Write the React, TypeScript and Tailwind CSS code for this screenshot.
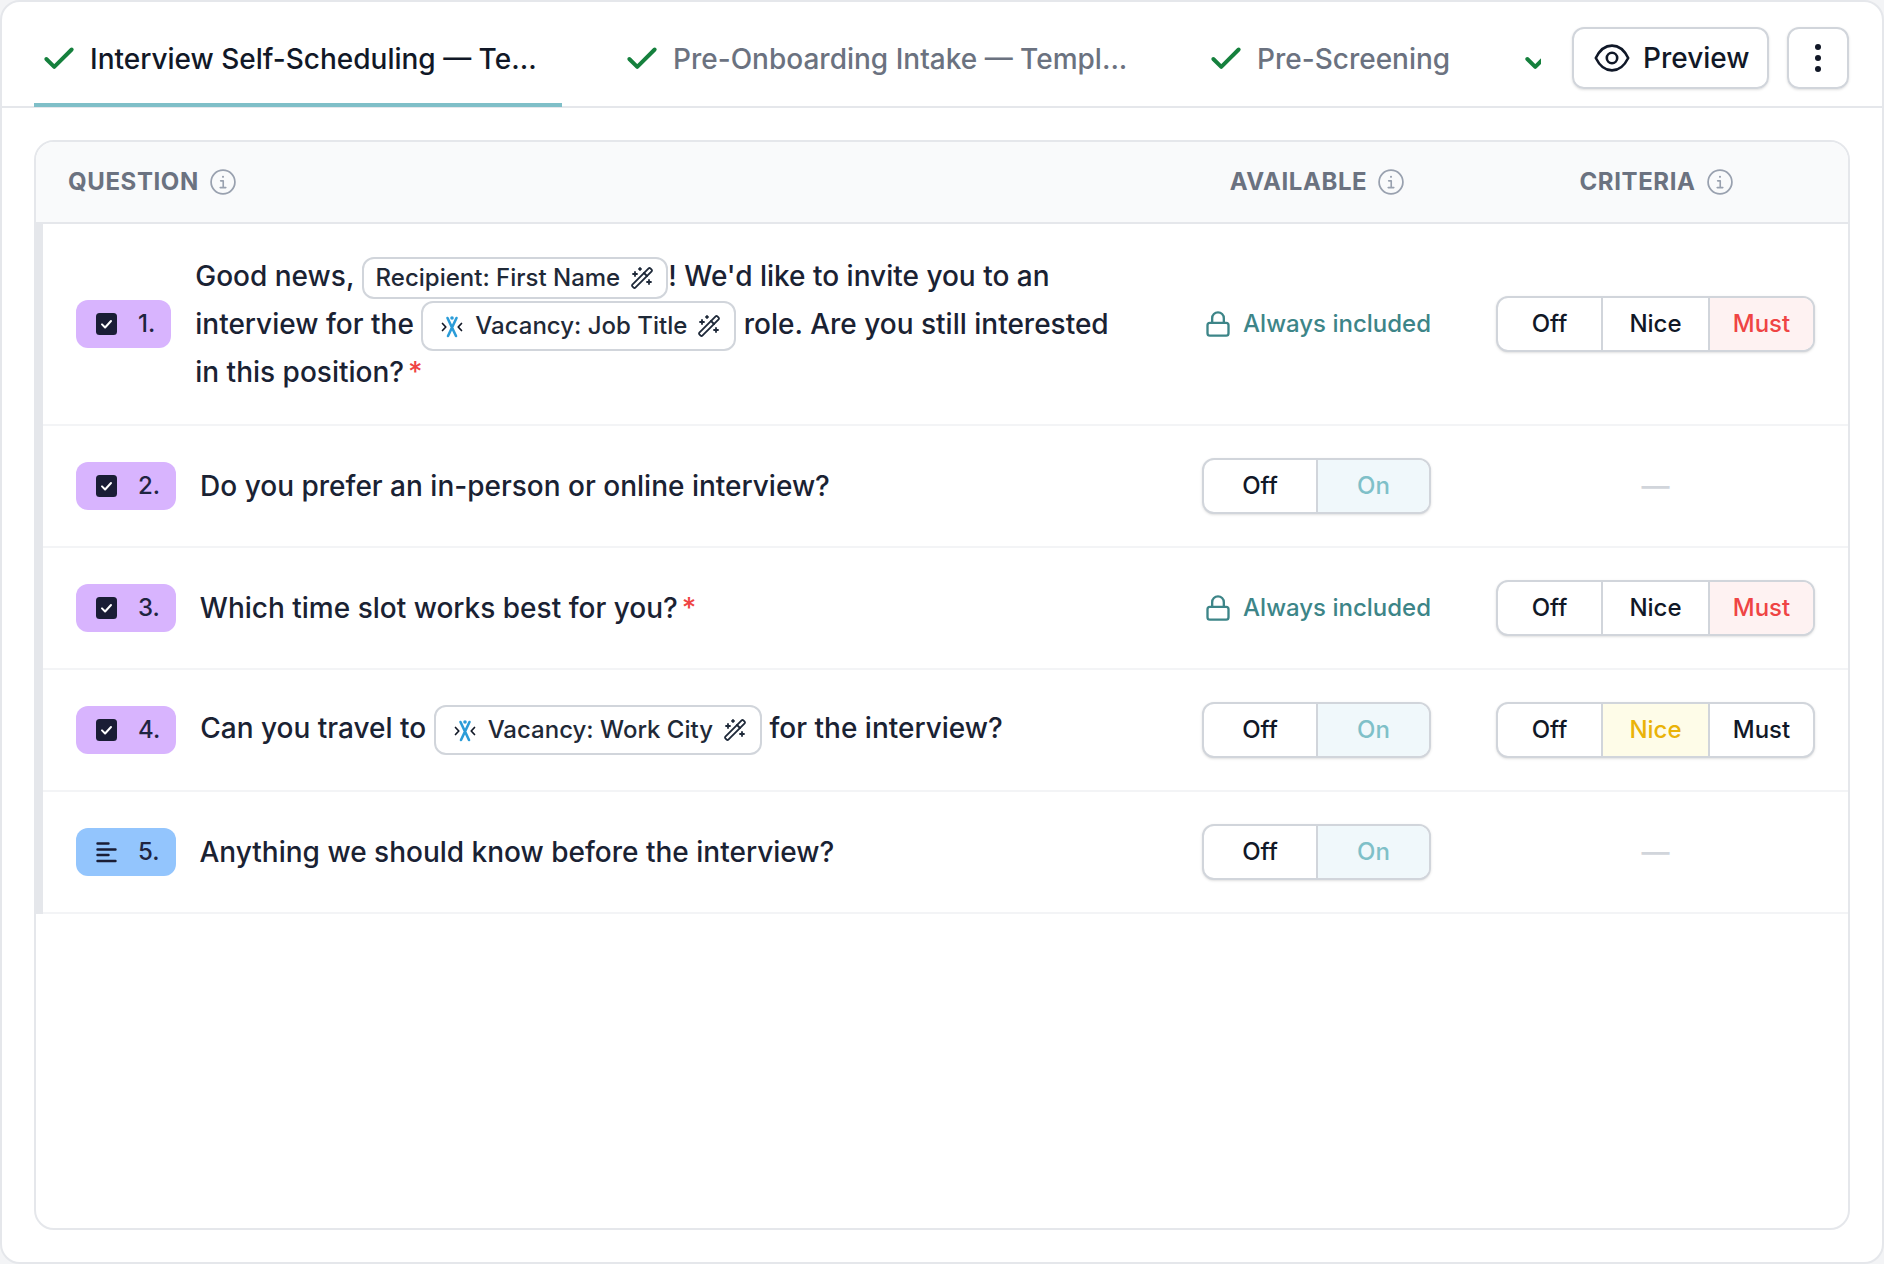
import { Check, Lock, WandSparkles } from "lucide-react";
import type { ReactNode } from "react";

function InfoIcon() {
  return (
    <svg viewBox="0 0 24 24" className="w-7 h-7 shrink-0 text-gray-400" fill="none" stroke="currentColor" strokeWidth="1.5" strokeLinecap="round" strokeLinejoin="round">
      <circle cx="12" cy="12" r="10.2" />
      <path d="M10 11h2.2v5.6M9.6 16.8h4.8" strokeWidth="1.4" />
      <circle cx="12" cy="7.6" r="0.9" fill="currentColor" stroke="none" />
    </svg>
  );
}

function EyeIcon() {
  return (
    <svg viewBox="0 0 36 28" className="w-9 h-7 text-gray-900" fill="none" stroke="currentColor" strokeWidth="2.6" strokeLinejoin="round">
      <path d="M1.8 14C5.6 6.2 11.2 1.6 18 1.6S30.4 6.2 34.2 14C30.4 21.8 24.8 26.4 18 26.4S5.6 21.8 1.8 14Z" />
      <circle cx="18" cy="14" r="5.2" />
    </svg>
  );
}

function VacancyLogo() {
  return (
    <svg viewBox="0 0 24 24" className="w-6 h-6 shrink-0" fill="none" strokeLinecap="round" strokeLinejoin="round">
      <path d="M7.5 4L16 22M16.5 4L8 22" stroke="#2b9cd8" strokeWidth="2.6" />
      <circle cx="12" cy="4" r="1.8" fill="#2b9cd8" />
      <path d="M2.5 9.5L5.8 13l-3.3 3.5M21.5 9.5L18.2 13l3.3 3.5" stroke="#111827" strokeWidth="1.7" />
    </svg>
  );
}

function CheckBadgeIcon() {
  return (
    <svg viewBox="0 0 21 22" className="w-[21px] h-[22px] shrink-0">
      <rect width="21" height="22" rx="3.5" fill="#1a1d35" />
      <path d="M6 11.4l3.1 3.1L15 8" fill="none" stroke="#fff" strokeWidth="2" strokeLinecap="round" strokeLinejoin="round" />
    </svg>
  );
}

function TextIcon() {
  return (
    <svg viewBox="0 0 21 22" className="w-[21px] h-[22px] shrink-0" fill="none" stroke="#1a1d35" strokeWidth="2.4" strokeLinecap="round">
      <path d="M1.5 2.5h11M1.5 8.5h18M1.5 14h11M1.5 20h18" />
    </svg>
  );
}

function Chip({ label, logo }: { label: string; logo?: boolean }) {
  return (
    <span
      className={`inline-flex items-center align-middle border-2 border-[#d1d5db] rounded-xl bg-white text-[24px] leading-none text-[#1f2937] ${
        logo ? "h-[50px] -my-1 pl-[17px] pr-[13px]" : "h-[42px] pl-3 pr-3"
      }`}
    >
      {logo && <VacancyLogo />}
      <span className={logo ? "ml-[11px]" : ""}>{label}</span>
      <WandSparkles className="w-6 h-6 ml-[10px] shrink-0 text-gray-800" strokeWidth={1.8} />
    </span>
  );
}

function Required() {
  return <span className="text-[#ef4444] ml-1">*</span>;
}

type Opt = { label: string; active?: string };

function Segment({ options, widths }: { options: Opt[]; widths: string[] }) {
  return (
    <div className="flex h-[56px] border-2 border-[#d1d5db] rounded-xl bg-white shadow-sm overflow-hidden">
      {options.map((o, i) => (
        <div
          key={o.label}
          className={`flex items-center justify-center text-[24px] font-medium ${widths[i]} ${i > 0 ? "border-l-2 border-[#d1d5db]" : ""} ${
            o.active ?? "text-[#111827]"
          }`}
        >
          {o.label}
        </div>
      ))}
    </div>
  );
}

function Available({ locked }: { locked?: boolean }) {
  if (locked) {
    return (
      <div className="flex items-center justify-between pl-[2px] text-[#3d8588] text-[24px] font-medium">
        <Lock className="w-7 h-7" strokeWidth={2} />
        <span>Always included</span>
      </div>
    );
  }
  return <Segment options={[{ label: "Off" }, { label: "On", active: "bg-[#f0f8fb] text-[#7fc0c8]" }]} widths={["w-[112px]", "flex-1"]} />;
}

function Criteria({ value }: { value?: "Nice" | "Must" }) {
  if (!value) {
    return <div className="text-center text-[28px] font-medium text-[#d1d5db]">—</div>;
  }
  return (
    <Segment
      options={[
        { label: "Off" },
        { label: "Nice", active: value === "Nice" ? "bg-[#fefce8] text-[#eab308]" : undefined },
        { label: "Must", active: value === "Must" ? "bg-[#fef2f2] text-[#ef4444]" : undefined },
      ]}
      widths={["w-[103px]", "w-[107px]", "flex-1"]}
    />
  );
}

function Row({
  n,
  text,
  kind = "check",
  locked,
  criteria,
  tall,
}: {
  n: number;
  text: ReactNode;
  kind?: "check" | "text";
  locked?: boolean;
  criteria?: "Nice" | "Must";
  tall?: boolean;
}) {
  return (
    <div className={`flex items-center pl-[33px] pr-[33px] border-b-2 border-[#f3f4f6] ${tall ? "h-[202px]" : "h-[122px]"}`}>
      <div className="flex-1 min-w-0 flex items-center gap-6 pr-[80px]">
        <div
          className={`flex items-center gap-[21px] h-12 pl-5 pr-4 rounded-xl text-[24px] font-medium text-[#1f2440] shrink-0 ${
            kind === "check" ? "bg-[#d8b4fe]" : "bg-[#93c5fd]"
          }`}
        >
          {kind === "check" ? <CheckBadgeIcon /> : <TextIcon />}
          <span>{n}.</span>
        </div>
        <div className="text-[28px] leading-[48px] font-medium text-[#1a2233]">{text}</div>
      </div>
      <div className="w-[229px] shrink-0">
        <Available locked={locked} />
      </div>
      <div className="w-[319px] ml-[65px] shrink-0">
        <Criteria value={criteria} />
      </div>
    </div>
  );
}

function Tab({ label, active, width }: { label?: string; active?: boolean; width: string }) {
  return (
    <div className={`flex items-center shrink-0 h-full pt-3 pl-[6px] ${width} ${active ? "border-b-4 border-[#7fbfc8] text-[#111827]" : "border-b-4 border-transparent text-[#6b7280]"}`}>
      <Check className="w-[38px] h-[38px] shrink-0 text-[#15803d]" strokeWidth={2.5} />
      {label && <span className="ml-3 whitespace-nowrap text-[28px] font-medium">{label}</span>}
    </div>
  );
}

function HeaderLabel({ children }: { children: string }) {
  return (
    <div className="flex items-center gap-[10px] text-[24px] font-bold uppercase tracking-wide text-[#6b7280]">
      <span>{children}</span>
      <InfoIcon />
    </div>
  );
}

export default function App() {
  return (
    <div className="w-[1884px] h-[1264px] bg-[#f3f4f6] font-['Inter',sans-serif]">
      <div className="w-full h-full flex flex-col bg-white border-2 border-[#e5e7eb] rounded-[20px] overflow-hidden">
        <div className="flex items-center h-[106px] shrink-0 border-b-2 border-[#e5e7eb] pl-8 pr-[33px]">
          <div className="flex gap-[55px] h-[104px] w-[1507px] overflow-hidden -mb-[2px]">
            <Tab active label="Interview Self-Scheduling — Te..." width="w-[528px]" />
            <Tab label="Pre-Onboarding Intake — Templ..." width="w-[529px]" />
            <Tab label="Pre-Screening" width="w-[259px]" />
            <Tab width="w-[60px]" />
          </div>
          <div className="ml-auto flex items-center gap-[18px] mt-2">
            <div className="flex items-center gap-[13px] h-[62px] w-[197px] pl-5 border-2 border-[#d1d5db] rounded-xl shadow-sm text-[28px] font-medium text-[#111827]">
              <EyeIcon />
              <span>Preview</span>
            </div>
            <div className="flex flex-col items-center justify-center gap-[5px] h-[62px] w-[62px] border-2 border-[#d1d5db] rounded-xl shadow-sm">
              <span className="w-[6px] h-[6px] rounded-full bg-[#111827]" />
              <span className="w-[6px] h-[6px] rounded-full bg-[#111827]" />
              <span className="w-[6px] h-[6px] rounded-full bg-[#111827]" />
            </div>
          </div>
        </div>

        <div className="flex-1 flex flex-col mt-[32px] ml-8 mr-8 mb-8 border-2 border-[#e5e7eb] rounded-[20px] overflow-hidden">
          <div className="flex items-center h-[82px] shrink-0 pl-8 pr-[33px] bg-[#f9fafb] border-b-2 border-[#e5e7eb]">
            <div className="flex-1">
              <HeaderLabel>Question</HeaderLabel>
            </div>
            <div className="w-[229px] shrink-0 flex justify-center pl-[2px]">
              <HeaderLabel>Available</HeaderLabel>
            </div>
            <div className="w-[319px] ml-[65px] shrink-0 flex justify-center pl-[2px]">
              <HeaderLabel>Criteria</HeaderLabel>
            </div>
          </div>
          <div className="border-l-[7px] border-[#e5e7eb]">
            <Row
              tall
              n={1}
              locked
              criteria="Must"
              text={
                <>
                  Good news, <Chip label="Recipient: First Name" />! We'd like to invite you to an interview for the <Chip logo label="Vacancy: Job Title" /> role. Are you still interested in this position?
                  <Required />
                </>
              }
            />
            <Row n={2} text="Do you prefer an in-person or online interview?" />
            <Row
              n={3}
              locked
              criteria="Must"
              text={
                <>
                  Which time slot works best for you?
                  <Required />
                </>
              }
            />
            <Row
              n={4}
              criteria="Nice"
              text={
                <div className="-mt-1">
                  Can you travel to <Chip logo label="Vacancy: Work City" /> for the interview?
                </div>
              }
            />
            <Row n={5} kind="text" text="Anything we should know before the interview?" />
          </div>
        </div>
      </div>
    </div>
  );
}
